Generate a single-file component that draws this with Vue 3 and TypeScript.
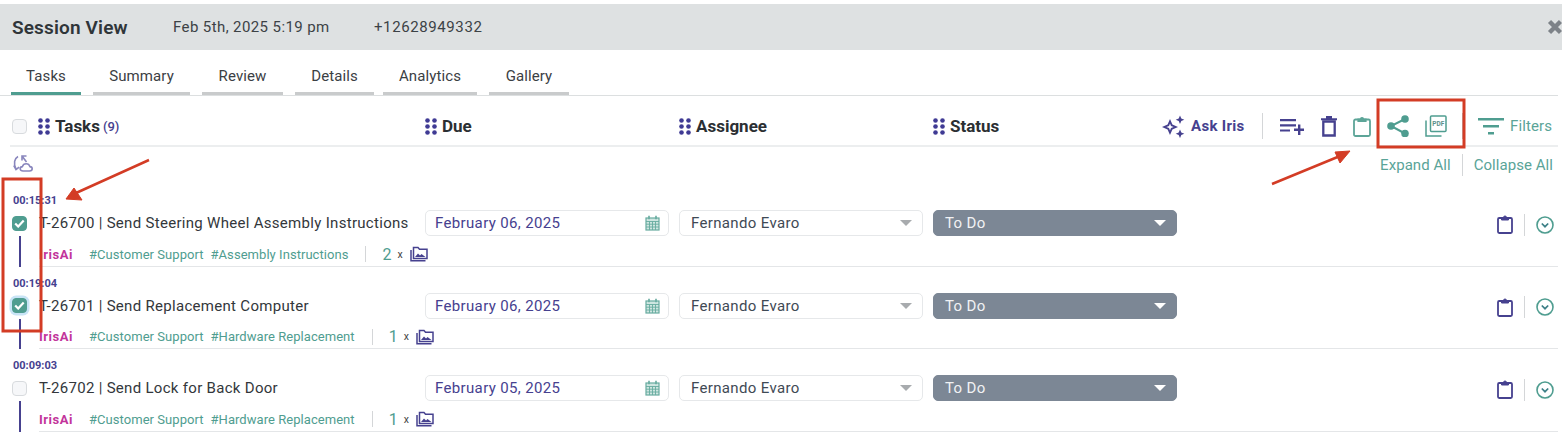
<script setup lang="ts">
interface Row {
  time: string
  title: string
  date: string
  tags: string[]
  count: number
  checked: boolean
  focus: boolean
}
const tabs = ['Tasks', 'Summary', 'Review', 'Details', 'Analytics', 'Gallery']
const columns = ['Due', 'Assignee', 'Status']
const rows: Row[] = [
  { time: '00:15:31', title: 'T-26700 | Send Steering Wheel Assembly Instructions', date: 'February 06, 2025', tags: ['#Customer Support', '#Assembly Instructions'], count: 2, checked: true, focus: false },
  { time: '00:19:04', title: 'T-26701 | Send Replacement Computer', date: 'February 06, 2025', tags: ['#Customer Support', '#Hardware Replacement'], count: 1, checked: true, focus: true },
  { time: '00:09:03', title: 'T-26702 | Send Lock for Back Door', date: 'February 05, 2025', tags: ['#Customer Support', '#Hardware Replacement'], count: 1, checked: false, focus: false },
]
const dots = [[2.5, 2.5], [9.5, 2.5], [2.5, 8.5], [9.5, 8.5], [2.5, 14.5], [9.5, 14.5]]
</script>

<template>
  <div class="page">
    <header class="band">
      <h1 class="band-title">Session View</h1>
      <span class="band-date">Feb 5th, 2025 5:19 pm</span>
      <span class="band-phone">+12628949332</span>
      <svg class="close" width="16" height="16" viewBox="0 0 16 16">
        <path d="M2.5 2.5l11 11M13.5 2.5l-11 11" stroke="#7d8288" stroke-width="4.4" fill="none" />
      </svg>
    </header>

    <nav class="tabs">
      <a v-for="(t, i) in tabs" :key="t" class="tab" :class="[`tab-${i}`, { active: i === 0 }]">{{ t }}</a>
    </nav>

    <section class="head">
      <span class="box head-box"></span>
      <div class="head-col first">
        <svg class="dots" width="12" height="17" viewBox="0 0 12 17"><circle v-for="(d, i) in dots" :key="i" :cx="d[0]" :cy="d[1]" r="2.3" /></svg>
        <span class="head-name">Tasks</span><span class="head-count">(9)</span>
      </div>
      <div v-for="c in columns" :key="c" class="head-col">
        <svg class="dots" width="12" height="17" viewBox="0 0 12 17"><circle v-for="(d, i) in dots" :key="i" :cx="d[0]" :cy="d[1]" r="2.3" /></svg>
        <span class="head-name">{{ c }}</span>
      </div>
      <div class="tools">
        <svg class="spark" width="23" height="23" viewBox="0 0 23 23" fill="#46418f">
          <path fill-rule="evenodd" d="M8 4l2.400 5.600 5.600 2.400-5.600 2.400L8 20l-2.400-5.600L0 12l5.600-2.400zM8 8.400l-1 2.600-2.600 1 2.600 1 1 2.600 1-2.600 2.600-1-2.600-1z" />
          <path d="M18 .5l1.300 3 3 1.300-3 1.300-1.300 3-1.300-3-3-1.300 3-1.300zM18 14.500l1.300 3 3 1.300-3 1.300-1.300 3-1.300-3-3-1.300 3-1.300z" />
        </svg>
        <span class="ask">Ask Iris</span>
        <i class="tool-sep sep-a"></i>
        <svg class="t-add" width="24" height="18" viewBox="0 0 24 18" fill="#46418f">
          <path d="M0 2h16v2.200H0zM0 7.200h16v2.200H0zM0 12.400h10v2.200H0zM18 7.500h2.400v4h3.600v2.400h-3.600V18H18v-4.100h-4v-2.400h4z" />
        </svg>
        <svg class="t-del" width="16" height="21" viewBox="0 0 16 21" fill="none" stroke="#46418f">
          <path d="M2.300 5.500h11.400v14H2.300z" stroke-width="2.300" />
          <path d="M0 3.200h16M5 1.100h6" stroke-width="2.100" />
        </svg>
        <svg class="t-clip" width="18" height="21" viewBox="0 0 18 21" fill="none" stroke="#5da598">
          <rect x="1" y="3.500" width="16" height="16.500" rx="1.500" stroke-width="1.800" />
          <path d="M5 5.500V3H7.500a1.500 1.500 0 0 1 3 0H13v2.500z" fill="#5da598" stroke-width="1.200" />
        </svg>
        <svg class="t-share" width="22" height="22" viewBox="0 0 22 22" fill="#4f9d90">
          <circle cx="18" cy="4" r="3.800" /><circle cx="4" cy="11" r="3.800" /><circle cx="18" cy="18.500" r="3.800" />
          <path d="M18 4L4 11l14 7.500" fill="none" stroke="#4f9d90" stroke-width="2" />
        </svg>
        <svg class="t-pdf" width="22" height="22" viewBox="0 0 22 22" fill="none" stroke="#4f9d90">
          <rect x="5.500" y="1" width="15.500" height="15.500" rx="1" stroke-width="1.500" />
          <path d="M1 5.500V21h15.500" stroke-width="1.500" />
          <text x="13.250" y="11.200" class="pdf-text">PDF</text>
        </svg>
        <i class="tool-sep sep-b"></i>
        <svg class="t-filter" width="26" height="18" viewBox="0 0 26 18" fill="#4f9d90">
          <path d="M0 1h26v2.400H0zM5 8h16v2.400H5zM10 15h6v2.400h-6z" />
        </svg>
        <span class="filters">Filters</span>
      </div>
    </section>

    <section class="sub">
      <svg class="swap" width="20" height="18" viewBox="0 0 20 18" fill="none" stroke="#8986bd" stroke-width="1.600">
        <path d="M5 1.500C1.500 3.500 .2 8.500 3 14M.8 10.500L3 14.500l3.200-2.300" />
        <path d="M13.500 1H9v4.500M9 1l4.500 6" />
        <path d="M10 16h6.500c1.700 0 2.700-1 2.700-2.200 0-1.200-.9-2.100-2.300-2.200-.6-2-2-2.900-3.700-2.900-1.900 0-3.300 1.100-3.800 2.900-1.400.1-2.200 1-2.200 2.200C7.200 15 8.300 16 10 16z" />
      </svg>
      <div class="links">
        <a class="link">Expand All</a>
        <i class="link-sep"></i>
        <a class="link">Collapse All</a>
      </div>
    </section>

    <section class="list">
      <article v-for="r in rows" :key="r.time" class="row">
        <div class="time">{{ r.time }}</div>
        <div class="cell-check">
          <span class="box" :class="{ checked: r.checked, focus: r.focus }">
            <svg v-if="r.checked" width="11" height="9" viewBox="0 0 11 9" fill="none" stroke="#fff" stroke-width="2.200">
              <path d="M1.200 4.500l3 3 5.500-6" />
            </svg>
          </span>
        </div>
        <div class="title">{{ r.title }}</div>
        <div class="field date">
          <span>{{ r.date }}</span>
          <svg width="15" height="16" viewBox="0 0 15 16" fill="none" stroke="#66ab9f">
            <rect x="1" y="3" width="13" height="12" stroke-width="1.200" fill="#cfe6e1" />
            <path d="M1 6.500h13M1 9.200h13M1 12h13M4.500 6.500V15M7.500 6.500V15M10.500 6.500V15" stroke-width=".9" />
            <path d="M4 .8v3.500M11 .8v3.500" stroke-width="1.600" />
          </svg>
        </div>
        <div class="field person">
          <span>Fernando Evaro</span>
          <i class="caret grey"></i>
        </div>
        <div class="field status">
          <span>To Do</span>
          <i class="caret white"></i>
        </div>
        <div class="actions">
          <svg width="16" height="19" viewBox="0 0 16 19" fill="none" stroke="#46418f">
            <rect x="1" y="3" width="14" height="15" rx="1.200" stroke-width="1.800" />
            <path d="M4.500 5V2.500h2a1.500 1.500 0 0 1 3 0h2V5z" fill="#46418f" stroke-width="1" />
          </svg>
          <i class="act-sep"></i>
          <svg width="18" height="18" viewBox="0 0 18 18" fill="none">
            <circle cx="9" cy="9" r="8" stroke="#4f9d90" stroke-width="1.600" />
            <path d="M5.800 7.500L9 10.700l3.200-3.200" stroke="#3c7f86" stroke-width="1.700" />
          </svg>
        </div>
        <div class="rail"></div>
        <div class="meta">
          <span class="iris">IrisAi</span>
          <span class="tag first-tag">{{ r.tags[0] }}</span>
          <span class="tag">{{ r.tags[1] }}</span>
          <i class="meta-sep"></i>
          <span class="count">{{ r.count }}</span>
          <span class="times">x</span>
          <svg width="18" height="16" viewBox="0 0 18 16" fill="none" stroke="#46418f">
            <path d="M1 4v10.800h14.500" stroke-width="1.500" />
            <path d="M3.500 1.500h4.500l1.500 1.700h7.500v9.300H3.500z" stroke-width="1.500" />
            <path d="M5 11l3-3.500 2 2 1.500-1.500 4 3z" fill="#46418f" stroke="none" />
          </svg>
        </div>
      </article>
    </section>

    <svg class="marks" width="1562" height="438" viewBox="0 0 1562 438" fill="none" stroke="#d33c25">
      <rect x="3" y="179" width="38" height="152" stroke-width="3" />
      <rect x="1378" y="100" width="86" height="47" stroke-width="3" />
      <path d="M149 160L76 193M1272 184L1340 156" stroke-width="2.500" />
      <path d="M66 199L74 188L82 200zM1350 151L1335 152L1340 163z" fill="#d33c25" stroke-width="1" />
    </svg>
  </div>
</template>

<style>
html, body { margin: 0; background: #fff; overflow: hidden; }
</style>

<style scoped>
.page {
  position: relative;
  width: 1562px;
  height: 438px;
  overflow: hidden;
  padding-top: 4px;
  box-sizing: border-box;
  font-family: "Roboto", "Liberation Sans", sans-serif;
  color: #2f3336;
  background: #fff;
}
i { display: block; }
.band {
  height: 46px;
  background: #dee1e2;
  display: flex;
  align-items: center;
  padding-left: 12px;
}
.band-title { margin: 0; width: 161px; font-size: 19px; font-weight: 600; letter-spacing: .15px; color: #2f3539; white-space: nowrap; }
.band-date { width: 201px; font-size: 15px; letter-spacing: .4px; color: #3c4246; white-space: nowrap; }
.band-phone { font-size: 15px; color: #3c4246; letter-spacing: .6px; }
.close { margin-left: auto; margin-right: -1px; flex: none; }
.tabs {
  height: 46px;
  width: 1558px;
  box-sizing: border-box;
  padding-left: 11px;
  display: flex;
  gap: 12px;
  border-bottom: 1px solid #dcdfe0;
}
.tab {
  height: 45px;
  box-sizing: border-box;
  border-bottom: 3px solid #c9cbcc;
  display: flex;
  align-items: center;
  justify-content: center;
  padding-top: 9px;
  font-size: 15px;
  letter-spacing: .1px;
  color: #3b4044;
}
.tab.active { border-bottom-color: #4f9d90; }
.tab-0 { width: 70px; }
.tab-1 { width: 97px; }
.tab-2 { width: 81px; }
.tab-3 { width: 79px; }
.tab-4 { width: 94px; margin-left: -3px; }
.tab-5 { width: 80px; }
.head {
  margin-left: 10px;
  width: 1548px;
  height: 51px;
  box-sizing: border-box;
  padding-top: 11px;
  border-bottom: 2px solid #eceeef;
  display: flex;
  align-items: center;
}
.box {
  width: 15px;
  height: 15px;
  box-sizing: border-box;
  border: 1px solid #d8dbde;
  border-radius: 4px;
  background: #f6f7f9;
  display: flex;
  align-items: center;
  justify-content: center;
  flex: none;
}
.box.checked { background: #4f9d90; border-color: #4f9d90; }
.box.focus { box-shadow: 0 0 0 2.500px #c8e4f6; }
.head-box { margin-left: 2px; }
.head-col { display: flex; align-items: center; width: 254px; }
.head-col.first { width: 387px; margin-left: 11px; }
.dots { fill: #3f3a94; flex: none; }
.head-name { margin-left: 5px; font-size: 17px; font-weight: 700; color: #2b2f33; }
.head-count { margin-left: 3px; font-size: 13px; font-weight: 500; color: #46418f; }
.tools { position: relative; display: flex; align-items: center; margin-left: -25px; }
.spark { flex: none; }
.ask { margin-left: 6px; width: 55px; font-size: 15px; font-weight: 700; letter-spacing: .3px; color: #46418f; white-space: nowrap; }
.tool-sep { width: 1px; height: 26px; background: #d4d6d8; flex: none; }
.sep-a { margin-left: 16px; }
.t-add { margin-left: 17px; flex: none; }
.t-del { margin-left: 17px; flex: none; }
.t-clip { margin-left: 16px; flex: none; }
.t-share { margin-left: 16px; flex: none; }
.t-pdf { margin-left: 16px; flex: none; }
.pdf-text { font-size: 6.500px; font-weight: 700; fill: #5c8f8a; stroke: none; text-anchor: middle; font-family: "Roboto", sans-serif; }
.sep-b { margin-left: 15px; width: 2px; background: #c4c6c8; }
.t-filter { margin-left: 14px; flex: none; }
.filters { margin-left: 6px; font-size: 15px; letter-spacing: .1px; color: #5aa498; }
.sub {
  height: 37px;
  display: flex;
  align-items: flex-start;
  justify-content: space-between;
  padding-right: 9px;
}
.swap { margin: 8px 0 0 13px; }
.links { display: flex; align-items: center; margin-top: 7px; }
.link { font-size: 15px; letter-spacing: .05px; color: #5aa498; white-space: nowrap; }
.link-sep { width: 1px; height: 22px; background: #d4d6d8; margin: 0 11px; }
.row {
  height: 82.500px;
  display: grid;
  grid-template-columns: 39px 386px 254px 254px 244px 1fr;
  grid-template-rows: 26px 26px 1fr;
  padding-right: 4px;
}
.time {
  grid-column: 1 / -1;
  padding: 10px 0 0 13px;
  line-height: 13px;
  font-size: 11px;
  font-weight: 700;
  color: #46418f;
}
.cell-check { display: flex; align-items: center; padding-left: 12px; }
.title { align-self: center; font-size: 15px; letter-spacing: .3px; color: #33373b; white-space: nowrap; }
.field {
  box-sizing: border-box;
  width: 244px;
  height: 26px;
  border: 1px solid #e6e8ea;
  border-radius: 5px;
  display: flex;
  align-items: center;
  justify-content: space-between;
  padding: 0 8px 0 9px;
  font-size: 15px;
  letter-spacing: .35px;
  background: #fff;
}
.date { color: #46418f; }
.person { color: #3f4a55; padding-left: 11px; padding-right: 10px; }
.status { background: #7c8795; border-color: #7c8795; color: #f1f2f4; padding-left: 11px; padding-right: 10px; }
.caret { width: 0; height: 0; border-left: 6px solid transparent; border-right: 6px solid transparent; }
.caret.grey { border-top: 6px solid #a8abae; }
.caret.white { border-top: 6px solid #fff; }
.actions { display: flex; align-items: center; justify-content: flex-end; gap: 11px; padding: 3px 4px 0 0; }
.act-sep { width: 1px; height: 22px; background: #d4d6d8; }
.rail { width: 2px; margin-left: 19px; background: #46418f; }
.meta {
  grid-column: 2 / -1;
  border-bottom: 1px solid #e4e6e8;
  display: flex;
  align-items: center;
  padding-top: 7px;
}
.iris { width: 50px; font-size: 13px; font-weight: 700; letter-spacing: .5px; color: #c2359b; }
.tag { font-size: 13px; letter-spacing: .05px; color: #4f9d90; white-space: nowrap; }
.first-tag { margin-right: 7px; }
.meta-sep { width: 1px; height: 16px; background: #d4d6d8; margin: 0 16px 0 17px; }
.count { font-size: 16px; font-weight: 400; color: #4f9d90; }
.times { margin: 0 7px 0 6px; font-size: 10.500px; color: #444; }
.marks { position: absolute; left: 0; top: 0; pointer-events: none; }
</style>
